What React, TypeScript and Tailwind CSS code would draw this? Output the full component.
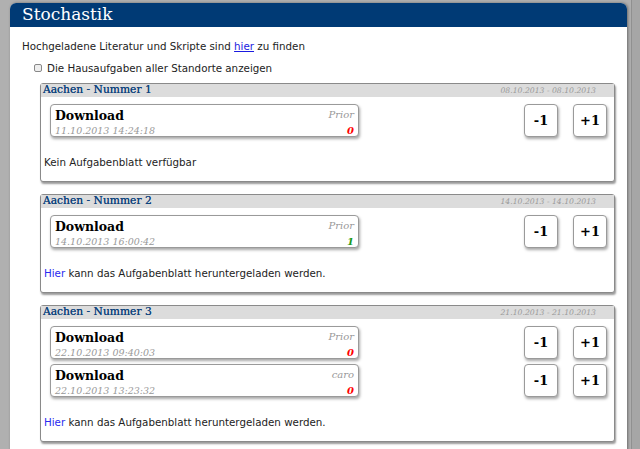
import React from "react";

const serif = { fontFamily: '"DejaVu Serif", serif' };
const sans = { fontFamily: '"DejaVu Sans", sans-serif' };

type Entry = { date: string; who: string; score: string; color: string };

function Card({ e }: { e: Entry }) {
  return (
    <div className="flex items-center">
      <div className="ml-[9px] w-[309px] h-[33px] rounded-[4px] bg-white border border-[#9a9a9a] shadow-[1px_2px_3px_rgba(0,0,0,0.35)] flex justify-between px-[4px] pt-[2px]" style={serif}>
        <div className="flex flex-col leading-none">
          <span className="text-[12.5px] font-bold text-black mt-[3px]">Download</span>
          <span className="text-[9.5px] italic text-[#999] mt-[3px]">{e.date}</span>
        </div>
        <div className="flex flex-col items-end leading-none">
          <span className="text-[10px] italic text-[#999] mt-[3px]">{e.who}</span>
          <span className="text-[10px] italic font-bold mt-[6px]" style={{ color: e.color }}>{e.score}</span>
        </div>
      </div>
      <div className="ml-auto mr-[7px] flex gap-[15px]">
        <Btn label="-1" />
        <Btn label="+1" />
      </div>
    </div>
  );
}

function Btn({ label }: { label: string }) {
  return (
    <div className="w-[34px] h-[33px] rounded-[4px] bg-white border border-[#9a9a9a] shadow-[1px_2px_3px_rgba(0,0,0,0.35)] flex items-center justify-center text-[13px] font-bold text-black" style={serif}>
      {label}
    </div>
  );
}

function Box({ title, range, entries, link }: { title: string; range: string; entries: Entry[]; link: boolean }) {
  return (
    <div className="ml-[30px] mr-[12px] border border-[#8a8a8a] rounded-[3px] bg-white shadow-[1px_2px_2px_rgba(0,0,0,0.4)] pb-[12px]">
      <div className="h-[13px] bg-[#dcdcdc] flex items-center justify-between px-[2px]" style={serif}>
        <span className="text-[10.7px] text-[#0f437d] leading-none [text-shadow:0_0_0.4px_#0f437d]">{title}</span>
        <span className="text-[7.7px] italic text-[#9a9a9a] leading-none mr-[16px]">{range}</span>
      </div>
      <div className="flex flex-col gap-[5px] mt-[7px]">
        {entries.map((e, i) => (
          <Card key={i} e={e} />
        ))}
      </div>
      <div className="mt-[18px] pl-[3px] text-[10.3px] leading-[14px] text-[#222]" style={sans}>
        {link ? (
          <>
            <span className="text-[#2a2af0]">Hier</span> kann das Aufgabenblatt heruntergeladen werden.
          </>
        ) : (
          "Kein Aufgabenblatt verfügbar"
        )}
      </div>
    </div>
  );
}

export default function App() {
  return (
    <div className="w-[640px] h-[449px] bg-[#b0b0b0] overflow-hidden flex">
      <div className="ml-[10px] mt-[3px] w-[617px] h-[460px] bg-white rounded-t-[6px] shadow-[1px_0_3px_rgba(0,0,0,0.4)]">
        <div className="h-[24px] bg-[#003a75] rounded-t-[6px] flex items-center pl-[12px] text-white text-[17px]" style={serif}>
          Stochastik
        </div>
        <div className="pl-[12px] pt-[12px] text-[10.3px] leading-[14px] text-[#222]" style={sans}>
          Hochgeladene Literatur und Skripte sind <span className="text-[#1a1ae0] underline">hier</span> zu finden
        </div>
        <div className="pl-[24px] pt-[8px] flex items-center text-[10.3px] leading-[14px] text-[#222]" style={sans}>
          <span className="w-[8px] h-[8px] rounded-[2px] border border-[#888] bg-[#eee] mr-[5px]" />
          Die Hausaufgaben aller Standorte anzeigen
        </div>
        <div className="flex flex-col gap-[12px] mt-[8px]">
          <Box title="Aachen - Nummer 1" range="08.10.2013 - 08.10.2013" link={false}
            entries={[{ date: "11.10.2013 14:24:18", who: "Prior", score: "0", color: "#ff0000" }]} />
          <Box title="Aachen - Nummer 2" range="14.10.2013 - 14.10.2013" link={true}
            entries={[{ date: "14.10.2013 16:00:42", who: "Prior", score: "1", color: "#1a9a1a" }]} />
          <Box title="Aachen - Nummer 3" range="21.10.2013 - 21.10.2013" link={true}
            entries={[
              { date: "22.10.2013 09:40:03", who: "Prior", score: "0", color: "#ff0000" },
              { date: "22.10.2013 13:23:32", who: "caro", score: "0", color: "#ff0000" },
            ]} />
        </div>
      </div>
      <div className="ml-[4px] w-[9px] h-full bg-[#a6a6a6] border-l border-[#909090]" />
    </div>
  );
}
